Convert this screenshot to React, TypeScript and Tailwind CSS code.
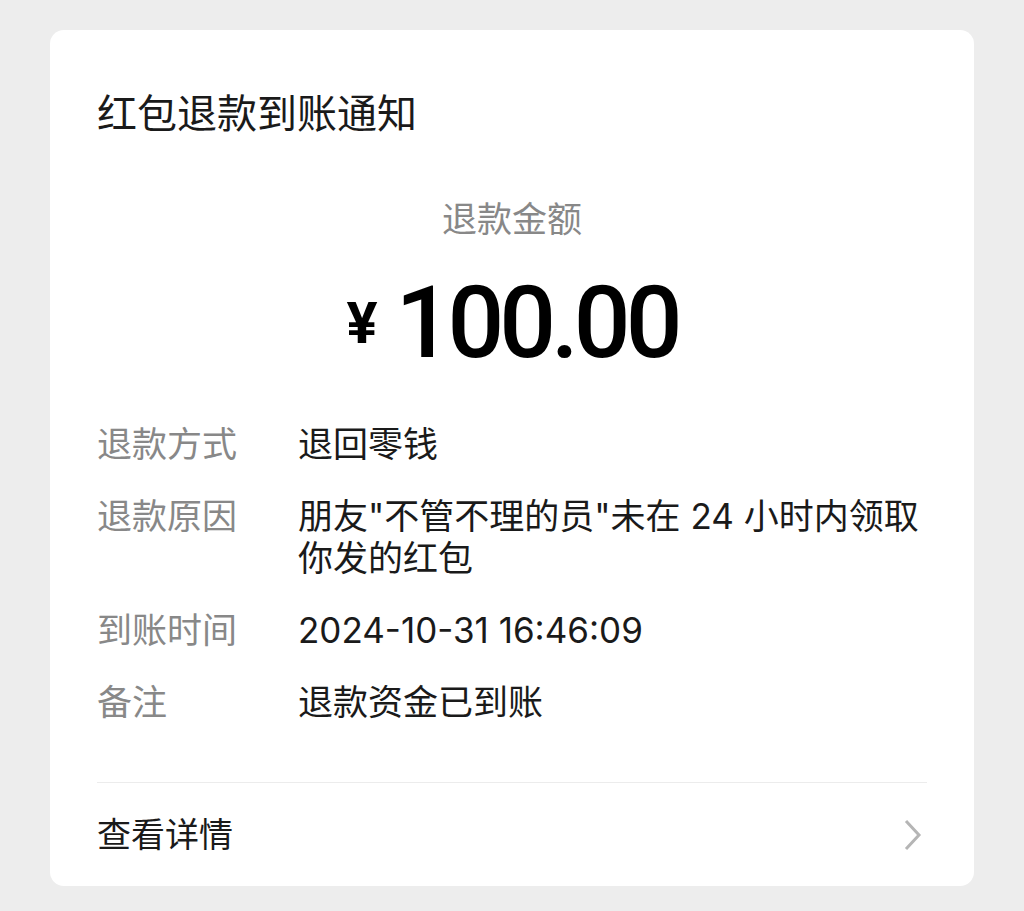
const CJK = "font-['Inter','Noto_Sans_CJK_SC',sans-serif]";

const ROWS: { label: string; value: string }[] = [
  { label: "退款方式", value: "退回零钱" },
  { label: "退款原因", value: "朋友\"不管不理的员\"未在 24 小时内领取你发的红包" },
  { label: "到账时间", value: "2024-10-31 16:46:09" },
  { label: "备注", value: "退款资金已到账" },
];

function InfoRow({ label, value }: { label: string; value: string }) {
  return (
    <div className="flex text-[35px] leading-[42px]">
      <div className="w-[201px] shrink-0 text-[#888888]">{label}</div>
      <div className="flex-1 text-[#1a1a1a]">{value}</div>
    </div>
  );
}

export default function App() {
  return (
    <div className={`min-h-[911px] w-[1024px] bg-[#ededed] pt-[30px] px-[50px] ${CJK}`}>
      <div className="rounded-[14px] bg-white px-[47px]">
        <div className="pt-[60px] text-[40px] leading-[48px] text-[#1a1a1a]">
          红包退款到账通知
        </div>

        <div className="mt-[60px] text-center text-[35px] leading-[42px] text-[#888888]">
          退款金额
        </div>

        <div className="mt-[28px] flex items-center justify-center text-black">
          <span className="mr-[18px] font-['Roboto',sans-serif] text-[58px] font-bold leading-none">
            ¥
          </span>
          <span className="font-['Roboto',sans-serif] text-[100px] font-medium leading-[110px] tracking-[-5px]">
            100.00
          </span>
        </div>

        <div className="mt-[45px] flex flex-col gap-[30px]">
          {ROWS.map((r) => (
            <InfoRow key={r.label} label={r.label} value={r.value} />
          ))}
        </div>

        <div className="mt-[59px] h-px bg-[#ececec]" />

        <div className="flex h-[103px] items-center justify-between">
          <span className="text-[34px] text-[#1a1a1a]">查看详情</span>
          <svg width="18" height="32" viewBox="0 0 18 32" className="mr-[5px]">
            <path d="M2 2 L15 16 L2 30" fill="none" stroke="#b5b5b5" strokeWidth="3" />
          </svg>
        </div>
      </div>
    </div>
  );
}
